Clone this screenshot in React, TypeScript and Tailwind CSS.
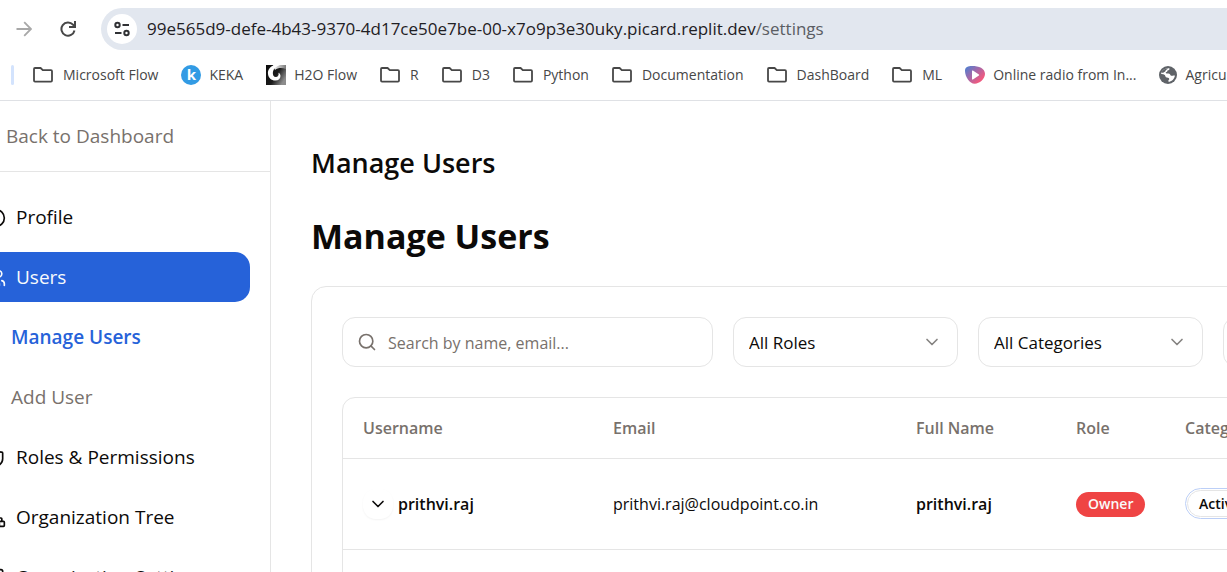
import { Building, ChevronDown, Circle, Network, Search, Shield, Users } from "lucide-react";
import type { ReactNode } from "react";

function FolderIcon() {
  return (
    <svg className="h-5 w-5 shrink-0" viewBox="0 0 20 20" fill="none" stroke="#474747" strokeWidth="1.8" strokeLinejoin="round" aria-hidden="true">
      <path d="M1 4a1 1 0 0 1 1-1h5.600l2.200 2.200H18a1 1 0 0 1 1 1V15.600a1 1 0 0 1-1 1H2a1 1 0 0 1-1-1z" />
    </svg>
  );
}

function KekaIcon() {
  return (
    <span className="flex h-5 w-5 shrink-0 items-center justify-center rounded-full bg-[#329be4] pb-0.5 text-[15px] leading-none font-bold text-white" aria-hidden="true">
      k
    </span>
  );
}

function FlowIcon() {
  return (
    <svg className="h-5 w-5 shrink-0" viewBox="0 0 20 20" aria-hidden="true">
      <defs>
        <linearGradient id="flow-shade" x1="0" y1="0" x2="1" y2="0.6">
          <stop offset="0" stopColor="#0a0a0a" />
          <stop offset="0.6" stopColor="#1c1c1c" />
          <stop offset="1" stopColor="#8c8c8c" />
        </linearGradient>
        <linearGradient id="flow-light" x1="0" y1="0" x2="1" y2="0">
          <stop offset="0" stopColor="#ffffff" />
          <stop offset="1" stopColor="#7a7a7a" />
        </linearGradient>
      </defs>
      <rect width="20" height="20" fill="url(#flow-shade)" />
      <path d="M7 0h13v4c-4-1.500-8-1.500-11 1z" fill="url(#flow-light)" />
      <path d="M9 0C4 1 1.500 5 2 9c.5 4 3.500 6.800 7.500 6.600 3-.2 5-2.100 5-4.600 0-1.500-.8-2.700-2-3.200.6 2.400-.6 4.200-2.500 4.200-2.300 0-3.500-2-3.100-5C7.400 4 10 1.200 14 0z" fill="#fff" />
    </svg>
  );
}

function RadioIcon() {
  return (
    <svg className="h-5 w-5 shrink-0" viewBox="0 0 20 20" aria-hidden="true">
      <defs>
        <linearGradient id="radio-shade" x1="0" y1="0.1" x2="0.9" y2="0.9">
          <stop offset="0" stopColor="#4f7fd0" />
          <stop offset="0.45" stopColor="#a668a8" />
          <stop offset="0.85" stopColor="#ee5a80" />
        </linearGradient>
      </defs>
      <path d="M0 5.200C.2 2.200 3 1 7 1c7 0 12.900 2.400 13 7.800.1 5-5.400 9.900-10.200 9.900C4.200 18.700-.2 11 0 5.200z" fill="url(#radio-shade)" />
      <path d="M7 6v8c0 .5.500.7.900.4l6-3.900c.4-.3.4-.7 0-1L7.900 5.600c-.4-.3-.9-.1-.9.400z" fill="#fff" />
    </svg>
  );
}

function GlobeIcon() {
  return (
    <svg className="h-[18px] w-[18px] shrink-0" viewBox="0 0 18 18" aria-hidden="true">
      <circle cx="9" cy="9" r="9" fill="#5f6368" />
      <path d="M10.400 2.200c.4 1.400-.5 2-1.900 2.300-.3 1-.4 1.600-1.700 1.800-.2 1 .4 1.200 1.600 1.200 1.500 0 2.600.1 3 1.400.4 1 1.300.9 2.300.9.700-.1 1.400-.3 2.200-.2-.4 3.300-2.800 5.900-6 6.300-.9-.8-.6-1.600.3-2.300.300-1.700-.7-2.100-2.300-2.200-1.600-.2-1.400-1.600-2.100-2.500C4.800 8.300 3.500 8 2.100 8.100 2.500 4.800 5.400 1.800 10.400 2.200z" fill="#fff" />
      <path d="M8.800 2.600c-.2 1-1.400 1-2.100 1.800-.5.700-.3 1.300-1.400 1.700-.5.500-.8.900-2.900.7C3.300 4.200 5.900 2.300 8.800 2.600z" fill="#5f6368" />
    </svg>
  );
}

function TuneIcon() {
  return (
    <svg className="h-[18px] w-[18px]" viewBox="0 0 18 18" fill="none" stroke="#303134" strokeWidth="2" aria-hidden="true">
      <circle cx="4.5" cy="5" r="2.2" />
      <path d="M9.500 5H16M2 13h6.500" />
      <circle cx="13.5" cy="13" r="2.2" />
    </svg>
  );
}

const bookmarks: { label: string; icon: ReactNode; folder?: boolean }[] = [
  { label: "Microsoft Flow", icon: <FolderIcon />, folder: true },
  { label: "KEKA", icon: <KekaIcon /> },
  { label: "H2O Flow", icon: <FlowIcon /> },
  { label: "R", icon: <FolderIcon />, folder: true },
  { label: "D3", icon: <FolderIcon />, folder: true },
  { label: "Python", icon: <FolderIcon />, folder: true },
  { label: "Documentation", icon: <FolderIcon />, folder: true },
  { label: "DashBoard", icon: <FolderIcon />, folder: true },
  { label: "ML", icon: <FolderIcon />, folder: true },
  { label: "Online radio from In...", icon: <RadioIcon /> },
  { label: "Agriculture", icon: <GlobeIcon /> },
];

function BrowserBar() {
  return (
    <header className="border-b border-[#dfe1e5] bg-white">
      <div className="flex h-[58px] items-center pl-3">
        <button type="button" aria-label="Forward" className="flex h-6 w-6 items-center justify-center">
          <svg className="h-4 w-4" viewBox="0 0 16 16" fill="none" stroke="#a8a8a8" strokeWidth="1.8" aria-hidden="true">
            <path d="M.5 8H15M8.200 1.200 15 8l-6.800 6.800" />
          </svg>
        </button>
        <button type="button" aria-label="Reload" className="ml-5 flex h-6 w-6 items-center justify-center">
          <svg className="h-4 w-4" viewBox="0 0 16 16" fill="none" stroke="#474747" strokeWidth="2" aria-hidden="true">
            <path d="M14.500 9.500A6.600 6.600 0 1 1 13 3.700L14.500 5.500" />
            <path d="M15 0v6H9" />
          </svg>
        </button>
        <div className="ml-[21px] flex h-[42px] min-w-0 flex-1 items-center rounded-l-full bg-[#e2e7ef] pl-[6px]">
          <button type="button" aria-label="Site information" className="flex h-[30px] w-[30px] shrink-0 items-center justify-center rounded-full bg-white">
            <TuneIcon />
          </button>
          <p className="ml-[10px] truncate text-[17px] text-[#1f2024]">
            99e565d9-defe-4b43-9370-4d17ce50e7be-00-x7o9p3e30uky.picard.replit.dev<span className="text-[#5a5d63]">/settings</span>
          </p>
        </div>
      </div>
      <nav aria-label="Bookmarks" className="flex h-[42px] items-start overflow-hidden pt-[7px] pl-[11px]">
        <span className="h-5 w-[3px] shrink-0 rounded-full bg-[#d3e3fd]" />
        <div className="ml-[19px] flex items-center gap-[23px]">
          {bookmarks.map((b) => (
            <a key={b.label} href="#" className={`flex h-5 shrink-0 items-center text-sm whitespace-nowrap text-[#474747] ${b.folder ? "gap-[10px]" : "gap-2"}`}>
              {b.icon}
              {b.label}
            </a>
          ))}
        </div>
      </nav>
    </header>
  );
}

const itemBase = "flex h-[50px] items-center gap-[10px] rounded-[15px] pt-px pl-4 text-[19px]";
const subItemBase = "flex h-[50px] items-center pt-px pl-[41px] text-[19px]";

function Sidebar() {
  return (
    <aside className="w-[271px] shrink-0 overflow-hidden border-r border-[#e5e5e5]">
      <div className="flex h-[71px] items-center border-b border-[#e5e5e5] pt-px pl-[6px]">
        <a href="#" className="text-[19px] text-[#78716c]">Back to Dashboard</a>
      </div>
      <nav aria-label="Settings" className="-ml-[30px] flex flex-col gap-[10px] py-5 pr-5 text-[#0c0a09]">
        <a href="#" className={itemBase}>
          <Circle className="h-5 w-5 shrink-0" />
          Profile
        </a>
        <a href="#" className={`${itemBase} bg-[#2662d9] text-[#f8fafc]`}>
          <Users className="h-5 w-5 shrink-0" />
          Users
        </a>
        <a href="#" className={`${subItemBase} font-semibold text-[#2662d9]`}>Manage Users</a>
        <a href="#" className={`${subItemBase} text-[#78716c]`}>Add User</a>
        <a href="#" className={itemBase}>
          <Shield className="h-5 w-5 shrink-0" />
          Roles &amp; Permissions
        </a>
        <a href="#" className={itemBase}>
          <Network className="h-5 w-5 shrink-0" />
          Organization Tree
        </a>
        <a href="#" className={itemBase}>
          <Building className="h-5 w-5 shrink-0" />
          Organization Settings
        </a>
      </nav>
    </aside>
  );
}

function FilterSelect({ label, options }: { label: string; options: string[] }) {
  return (
    <div className="relative w-[225px] shrink-0">
      <select aria-label={label} className="h-[50px] w-full appearance-none rounded-[13px] border border-[#e5e5e5] bg-white px-[15px] pt-0.5 text-[17px] text-[#0c0a09]">
        {options.map((o) => (
          <option key={o}>{o}</option>
        ))}
      </select>
      <ChevronDown className="pointer-events-none absolute top-[15px] right-4 h-5 w-5 text-[#858381]" />
    </div>
  );
}

function UsersTable() {
  return (
    <div className="mt-[30px] rounded-[13px] border border-[#e5e5e5]">
      <table className="w-full table-fixed text-left text-base text-[#0c0a09]">
        <colgroup>
          <col className="w-[250px]" />
          <col className="w-[303px]" />
          <col className="w-[160px]" />
          <col className="w-[109px]" />
          <col />
        </colgroup>
        <thead>
          <tr className="h-[60px] border-b border-[#e5e5e5] text-[#78716c]">
            <th scope="col" className="px-5 font-semibold">Username</th>
            <th scope="col" className="px-5 font-semibold">Email</th>
            <th scope="col" className="px-5 font-semibold">Full Name</th>
            <th scope="col" className="px-5 font-semibold">Role</th>
            <th scope="col" className="px-5 font-semibold">Category</th>
          </tr>
        </thead>
        <tbody>
          <tr className="h-[91px] border-b border-[#e5e5e5]">
            <td className="px-5">
              <div className="flex items-center gap-[5px]">
                <button type="button" aria-label="Expand prithvi.raj" className="flex h-[30px] w-[30px] items-center justify-center rounded-[13px] shadow-xs">
                  <ChevronDown className="h-5 w-5" />
                </button>
                <span className="font-semibold">prithvi.raj</span>
              </div>
            </td>
            <td className="px-5">prithvi.raj@cloudpoint.co.in</td>
            <td className="px-5 font-semibold">prithvi.raj</td>
            <td className="px-5">
              <span className="inline-flex h-[25px] items-center rounded-full bg-[#ef4444] px-3 align-middle text-sm font-semibold text-[#fafaf9]">Owner</span>
            </td>
            <td className="px-5">
              <span className="inline-flex rounded-full border border-[#bccff7] p-px align-middle">
                <span className="inline-flex h-[27px] items-center rounded-full border border-[#e5e5e5] px-[11px] text-sm font-semibold">Active</span>
              </span>
            </td>
          </tr>
          <tr className="h-[91px]">
            <td colSpan={5} />
          </tr>
        </tbody>
      </table>
    </div>
  );
}

export default function App() {
  return (
    <div className="flex h-screen flex-col overflow-hidden bg-white font-['Open_Sans','Noto_Sans',sans-serif]">
      <BrowserBar />
      <div className="flex min-h-0 flex-1">
        <Sidebar />
        <main className="min-w-0 flex-1 overflow-hidden pt-10 pl-10 text-[#0c0a09]">
          <h1 className="mt-1 text-[27px] leading-9 font-semibold">Manage Users</h1>
          <h2 className="mt-[30px] text-[34px] leading-[50px] font-bold">Manage Users</h2>
          <section className="mt-[25px] min-w-[1200px] rounded-[15px] border border-[#e5e5e5] p-[30px]">
            <div className="flex gap-5">
              <div className="relative w-[371px] shrink-0">
                <Search className="absolute top-[15px] left-[15px] h-5 w-5 text-[#78716c]" />
                <input type="search" aria-label="Search users" placeholder="Search by name, email..." className="h-[50px] w-full rounded-[13px] border border-[#e5e5e5] pt-0.5 pr-4 pl-[45px] text-base placeholder:text-[#78716c]" />
              </div>
              <FilterSelect label="Role" options={["All Roles", "Owner"]} />
              <FilterSelect label="Category" options={["All Categories", "Active"]} />
              <FilterSelect label="Status" options={["All Statuses"]} />
            </div>
            <UsersTable />
          </section>
        </main>
      </div>
    </div>
  );
}
